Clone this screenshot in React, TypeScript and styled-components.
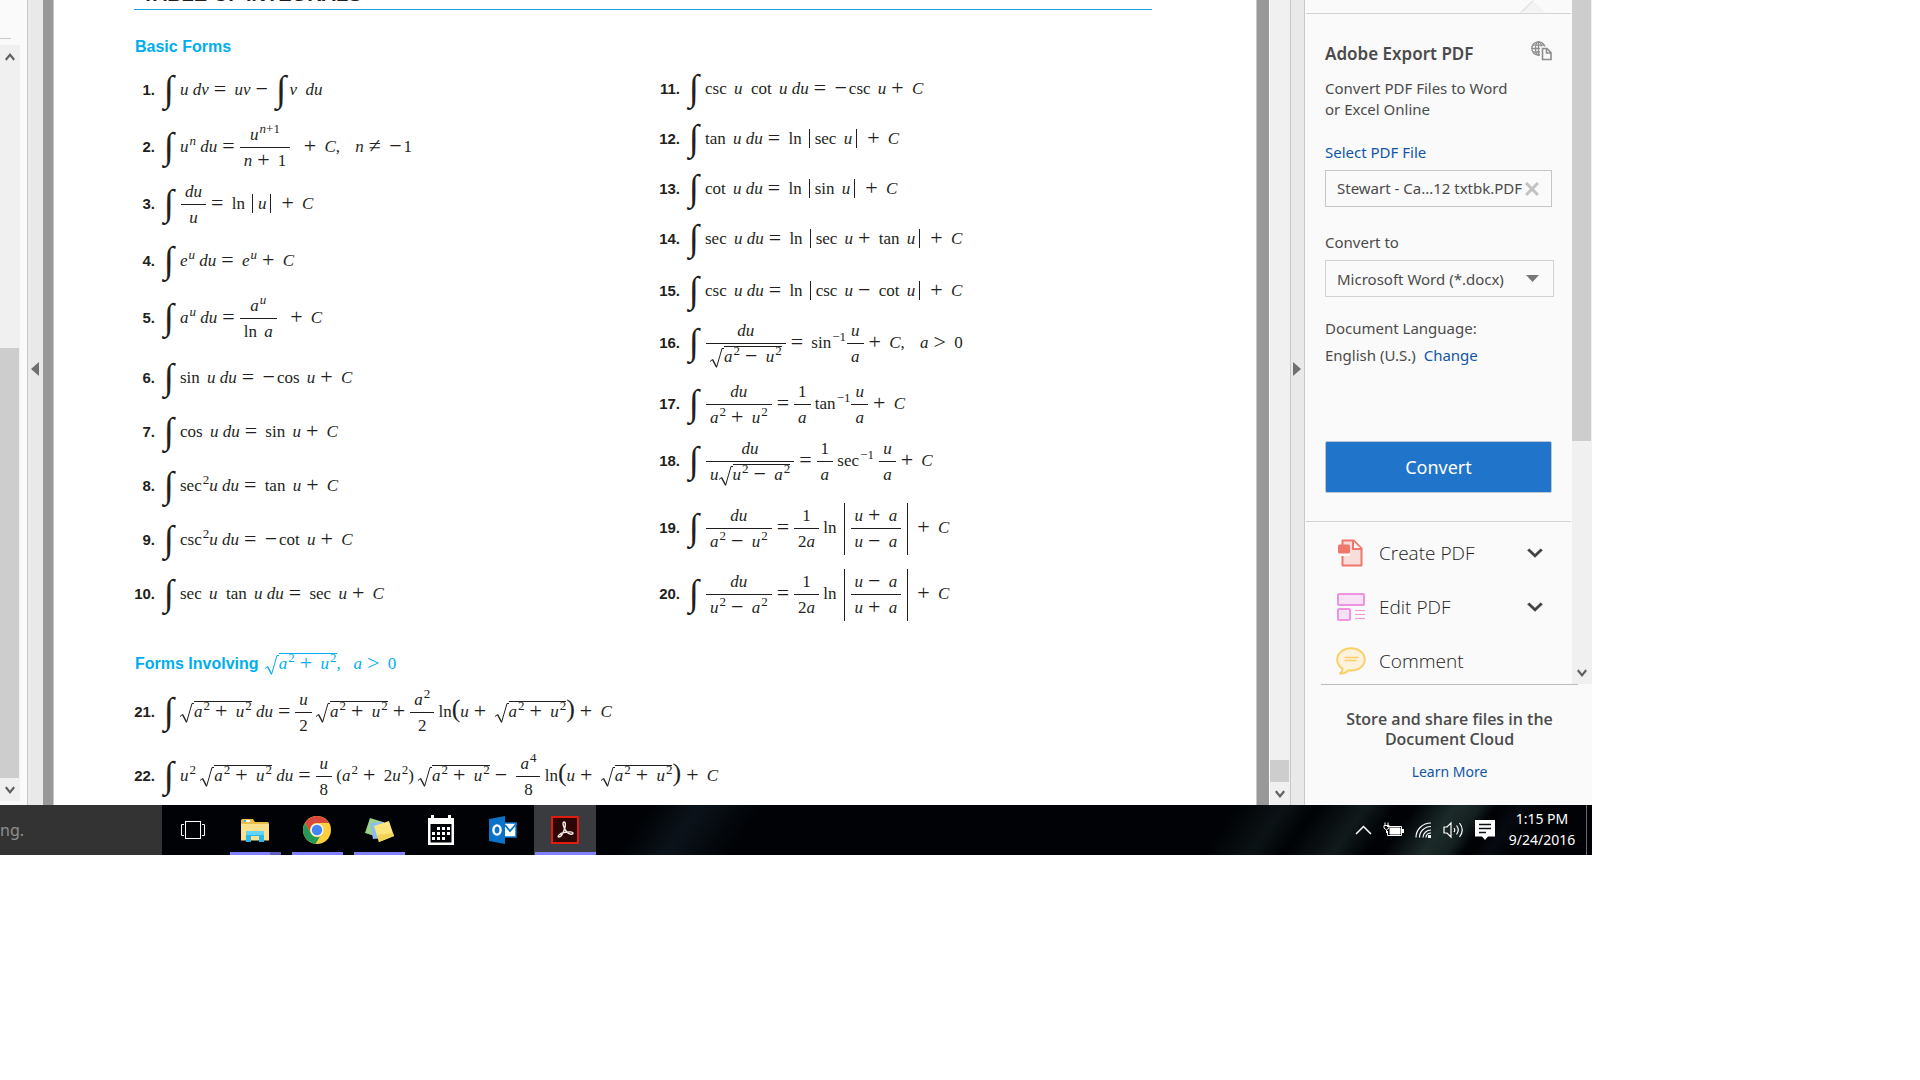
import React from "react";
import styled, { createGlobalStyle } from "styled-components";

const SERIF = `"Liberation Serif", "Times New Roman", serif`;
const SANS = `"Liberation Sans", Arial, sans-serif`;
const UI = `"Noto Sans", "Open Sans", sans-serif`;

const GlobalStyle = createGlobalStyle`
  *, *::before, *::after { box-sizing: border-box; }
  body { margin: 0; background: #fff; }
  button, input, select { font: inherit; margin: 0; padding: 0; border: 0; background: none; color: inherit; }
  h1, h2, p, ol, ul { margin: 0; padding: 0; }
`;

/* ---------- shell ---------- */
const Screen = styled.div`
  width: 100%;
  max-width: 1592px;
  font-family: ${UI};
`;
const Workspace = styled.main`
  display: flex;
  align-items: stretch;
  overflow: hidden;
`;
const ThumbPanel = styled.aside`
  flex: none;
  width: 27px;
  background: #fafafa;
  display: flex;
  flex-direction: column;
  padding-bottom: 4px;
`;
const ThumbHead = styled.div`
  width: 11px;
  height: 39px;
  margin-bottom: 6px;
  border-bottom: 1px solid #c8c8c8;
`;
const Track = styled.div<{ $grow?: boolean }>`
  flex: ${(p) => (p.$grow ? 1 : "none")};
  width: 20px;
  display: flex;
  flex-direction: column;
  background: #f0f0f0;
`;
const Space = styled.div<{ $n: number }>`
  flex: ${(p) => p.$n} 1 0;
`;
const Thumb = styled.div<{ $n?: number; $h?: number }>`
  flex: ${(p) => (p.$n ? `${p.$n} 1 0` : "none")};
  height: ${(p) => (p.$h ? `${p.$h}px` : "auto")};
  width: 19px;
  background: #cdcdcd;
`;
const ScrollButton = styled.button`
  flex: none;
  width: 19px;
  height: 23px;
  display: flex;
  align-items: center;
  justify-content: center;
  color: #606060;
`;
const Splitter = styled.button<{ $right?: boolean }>`
  && {
    flex: none;
    width: ${(p) => (p.$right ? 15 : 16)}px;
    display: flex;
    align-items: flex-start;
    justify-content: center;
    padding: 362px 2px 0 0;
    background: #e9e9e9;
    border-left: 1px solid #c8c8c8;
    border-right: ${(p) => (p.$right ? "1px solid #c8c8c8" : "0")};
  }
`;
const Gutter = styled.div<{ $right?: boolean }>`
  flex: none;
  width: ${(p) => (p.$right ? 14 : 11)}px;
  background: #999;
  border-left: ${(p) => (p.$right ? "1px solid #c8c8c8" : "0")};
  border-right: ${(p) => (p.$right ? "1px solid #fff" : "1px solid #c8c8c8")};
`;

/* ---------- document ---------- */
const Page = styled.article`
  flex: 1;
  min-width: 0;
  overflow: hidden;
  background: #fff;
  padding: 0 104px 0 80px;
  color: #231f20;
  font: 17px/20px ${SERIF};
`;
const Title = styled.h1`
  margin-top: -18px;
  padding: 0 8px 3px;
  border-bottom: 1px solid #1ba5dd;
  font: bold 20px/24px ${SANS};
  white-space: nowrap;
`;
const Heading = styled.h2<{ $gap?: number }>`
  margin: 27px 0 ${(p) => p.$gap ?? 4}px 1px;
  color: #00aeef;
  font: 17px/20px ${SERIF};
  white-space: nowrap;
`;
const HeadWords = styled.span`
  margin-right: 2px;
  font: bold 16px/20px ${SANS};
`;
const Columns = styled.div`
  display: grid;
  grid-template-columns: 525px 1fr;
  align-items: start;
`;
const List = styled.ol<{ $top?: number }>`
  list-style: none;
  margin-top: ${(p) => p.$top ?? 0}px;
`;
const Row = styled.li<{ $h: number; $gap?: number }>`
  display: flex;
  align-items: center;
  min-height: ${(p) => p.$h}px;
  margin-top: ${(p) => p.$gap ?? 0}px;
  white-space: nowrap;
`;
const Num = styled.span`
  width: 21px;
  margin-right: 9px;
  text-align: right;
  font: bold 15px/20px ${SANS};
`;
const Body = styled.span`
  display: block;
  height: 20px;
  margin-left: 7px;
`;
const IntSign = styled.span`
  display: inline-block;
  width: 9px;
  height: 20px;
  font-size: 37px;
  line-height: 18px;
  vertical-align: -6px;
`;
const V = styled.i``;
const Fn = styled.span`
  margin-right: 3px;
`;
const Op = styled.span`
  margin: 0 4px 0 5px;
  font-size: 22px;
  line-height: 0;
  vertical-align: -1px;
`;
const Neg = styled.span`
  margin-right: 2px;
  font-size: 22px;
  line-height: 0;
  vertical-align: -1px;
`;
const Sup = styled.sup`
  margin-left: 1px;
  font-size: 13px;
  line-height: 0;
  vertical-align: 7px;
`;
const FracBox = styled.span`
  display: inline-flex;
  flex-direction: column;
  align-items: center;
  vertical-align: 12px;
  margin: -14px 0 -14px 1px;
`;
const Top = styled.span`
  padding: 0 4px 2px;
`;
const Bottom = styled.span`
  align-self: stretch;
  text-align: center;
  padding: 3px 4px 0;
  border-top: 1px solid currentColor;
`;
const Abs = styled.span`
  margin: 0 5px 0 4px;
  padding: 0 4px 0 5px;
  border: solid currentColor;
  border-width: 0 1px;
`;
const BigAbs = styled.span`
  display: inline-flex;
  vertical-align: 12px;
  margin: -17px 4px -17px 7px;
  padding: 3px 6px;
  border: solid currentColor;
  border-width: 0 1px;
  & > ${FracBox} { margin: 0; }
`;
const RootSign = styled.svg`
  width: 14px;
  height: 20px;
  margin: -3px 0;
  vertical-align: -3px;
`;
const Radicand = styled.span`
  display: inline-block;
  line-height: 20px;
  box-shadow: 0 -1px 0 currentColor;
`;
const Paren = styled.span`
  font-size: 26px;
  line-height: 0;
`;
const Cond = styled.span`
  margin-left: 11px;
`;

const Int = () => <IntSign>∫</IntSign>;
const Frac = ({ t, b }: { t: React.ReactNode; b: React.ReactNode }) => (
  <FracBox><Top>{t}</Top><Bottom>{b}</Bottom></FracBox>
);
const Root = ({ children }: { children: React.ReactNode }) => (
  <span>
    <RootSign viewBox="0 0 14 20" fill="none" stroke="currentColor" aria-hidden="true">
      <path d="M0 13.5 2.5 11.5" strokeWidth="1" />
      <path d="M2.5 11.5 6.5 19" strokeWidth="1.5" />
      <path d="M6.5 19.5 12 .5H14" strokeWidth="1" />
    </RootSign>
    <Radicand>{children}</Radicand>
  </span>
);
const u = <V>u</V>;
const a = <V>a</V>;
const du = <V>du</V>;
const u2 = <><V>u</V><Sup>2</Sup></>;
const a2 = <><V>a</V><Sup>2</Sup></>;
const eq = <Op>=</Op>;
const plusC = <><Op>+</Op> <V>C</V></>;
const aPlusU = <>{a2}<Op>+</Op> {u2}</>;
const rootAU = <Root>{aPlusU}</Root>;
const lnRoot = <>ln<Paren>(</Paren>{u}<Op>+</Op> {rootAU}<Paren>)</Paren>{plusC}</>;

const Formula = ({ n, h, gap, children }: { n: number; h: number; gap?: number; children: React.ReactNode }) => (
  <Row $h={h} $gap={gap}><Num>{n}.</Num><Int /><Body>{children}</Body></Row>
);

/* ---------- tools panel ---------- */
const Tools = styled.aside`
  flex: none;
  width: 287px;
  background: #fafafa;
  color: #4b4b4b;
  font-size: 15px;
  line-height: 21px;
`;
const ToolsScroll = styled.div`
  display: flex;
  height: 684px;
`;
const ToolsBody = styled.div`
  flex: 1;
  min-width: 0;
  padding: 0 1px;
  white-space: nowrap;
`;
const Notch = styled.div`
  height: 14px;
  padding-left: 214px;
  border-bottom: 1px solid #d4d4d4;
  line-height: 0;
`;
const Export = styled.section`
  display: flex;
  flex-direction: column;
  align-items: flex-start;
  height: 508px;
  padding: 27px 19px 0;
  border-bottom: 1px solid #d4d4d4;
`;
const ExportHead = styled.div`
  align-self: stretch;
  display: flex;
  justify-content: space-between;
  margin-bottom: 11px;
`;
const ExportTitle = styled.h2`
  font: 600 17px/26px ${UI};
`;
const FieldLabel = styled.label<{ $link?: boolean; $top: number }>`
  margin: ${(p) => p.$top}px 0 7px;
  color: ${(p) => (p.$link ? "#0f56a8" : "inherit")};
`;
const Field = styled.div`
  align-self: stretch;
  display: flex;
  align-items: center;
  height: 37px;
  padding-left: 11px;
  border: 1px solid #c6c6c6;
  & > input { flex: 1; min-width: 0; width: 100%; }
  & > button { line-height: 0; margin: 0 12px 0 0; }
`;
const SelectField = styled(Field)`
  position: relative;
  margin-right: -2px;
  border-color: #d2d2d2;
  & > select { width: 100%; padding-top: 2px; appearance: none; }
  & > svg { position: absolute; right: 14px; top: 14px; pointer-events: none; }
`;
const Language = styled.p`
  margin-top: 18px;
  line-height: 27px;
`;
const Link = styled.a`
  color: #0f56a8;
  text-decoration: none;
`;
const ConvertButton = styled.button`
  && {
    align-self: stretch;
    height: 52px;
    margin-top: 72px;
    border: 1px solid #b9c6d3;
    border-radius: 2px;
    background: #2074c9;
    color: #fff;
    font-size: 18px;
  }
`;
const ToolButton = styled.button`
  && {
    width: 100%;
    height: 54px;
    display: grid;
    grid-template-columns: 30px 1fr 16px;
    column-gap: 13px;
    align-items: center;
    padding: 0 28px 0 30px;
    text-align: left;
    color: #222;
    font: 300 19px/26px "Open Sans", ${UI};
  }
`;
const ToolList = styled.div`
  padding-top: 4px;
`;
const Promo = styled.section`
  margin: 0 14px 0 16px;
  padding-top: 24px;
  border-top: 1px solid #bcbcbc;
  text-align: center;
  line-height: 20px;
  white-space: nowrap;
  & > p { font: 600 16px/20px "Open Sans", ${UI}; }
  & > a { display: block; margin-top: 13px; font-size: 14px; }
`;

/* ---------- taskbar ---------- */
const Taskbar = styled.footer`
  display: flex;
  height: 50px;
  color: #fff;
  background:
    linear-gradient(125deg, transparent 76%, #17232580 79%, transparent 81%),
    linear-gradient(125deg, transparent 81%, #1c2a2899 84%, transparent 86%),
    linear-gradient(125deg, transparent 87%, #1c2b29 89.5%, #14201f 91%, transparent 92%),
    linear-gradient(125deg, transparent 92.5%, #10152066 93.5%, transparent 95%),
    linear-gradient(125deg, transparent 40%, #0b131a 43%, transparent 47%),
    #000205;
`;
const Search = styled.input`
  && {
    flex: none;
    width: 162px;
    background: #333;
    color: #909090;
    font-size: 16px;
  }
`;
const Apps = styled.nav`
  display: flex;
  flex: 1;
`;
const AppButton = styled.button<{ $active?: boolean; $open?: boolean; $many?: boolean }>`
  && {
    width: 62px;
    height: 50px;
    display: grid;
    place-items: center;
    background:
      ${(p) =>
        p.$many
          ? "linear-gradient(90deg, #8080fb 40px, #5f5fb8 40px) center bottom / 51px 3px no-repeat,"
          : p.$open || p.$active
          ? `linear-gradient(#8080fb, #8080fb) center bottom / ${p.$active ? 61 : 51}px 3px no-repeat,`
          : ""}
      ${(p) => (p.$active ? "#3a3b3e" : "transparent")};
  }
`;
const Tray = styled.div`
  display: flex;
  align-items: center;
  gap: 11px;
  & > button { line-height: 0; }
`;
const Clock = styled.time`
  text-align: center;
  font-size: 14px;
  line-height: 21px;
  padding-bottom: 2px;
  margin-left: 1px;
  width: 70px;
`;
const Peek = styled.button`
  && {
    align-self: stretch;
    width: 6px;
    margin-left: -2px;
    border-left: 1px solid #6a6a6a;
  }
`;

const Chevron = ({ up, big }: { up?: boolean; big?: boolean }) => (
  <svg width={big ? 16 : 10} height={big ? 10 : 8} viewBox="0 0 10 7" preserveAspectRatio="none" fill="none" stroke={big ? "#444" : "currentColor"} strokeWidth={big ? 1.9 : 2}>
    <path d={up ? "M.8 6 5 1.5 9.2 6" : "M.8 1 5 5.5 9.2 1"} />
  </svg>
);

const CreateIcon = () => (
  <svg width="30" height="28" viewBox="0 0 30 28">
    <path d="M6.5 1.5h11l8 8v17h-19z" fill="#f8dedb" stroke="#f0776b" strokeWidth="2" strokeLinejoin="round" />
    <path d="M17 2v8h8" fill="#fff" stroke="#f0776b" strokeWidth="2" />
    <path d="M4 14h10v3H4z" fill="#fafafa" />
    <rect x="2" y="5.500" width="12" height="9" rx="1.500" fill="#f0776b" />
  </svg>
);
const EditIcon = () => (
  <svg width="30" height="28" viewBox="0 0 30 28" fill="#f8e2f5" stroke="#ee93e0" strokeWidth="2">
    <rect x="2" y="1" width="26" height="11" rx="1" />
    <rect x="2" y="16" width="12" height="11" rx="1" />
    <path d="M19 17.500h10M19 21.500h10M19 25.500h10" strokeWidth="1.200" />
  </svg>
);
const CommentIcon = () => (
  <svg width="30" height="28" viewBox="0 0 30 28" fill="#fdf3dc" stroke="#fccf66" strokeWidth="2">
    <path d="M15 1.200C7.500 1.200 1.200 6 1.200 12.500c0 4 2.300 7.300 5.500 9.300-.3 2-1.200 3.500-2.700 4.700 3.500.2 6.500-1.200 8.300-3.200.9.100 1.800.2 2.700.2 7.500 0 13.800-4.500 13.800-11S22.500 1.200 15 1.200z" strokeLinejoin="round" />
    <path d="M8.500 10.500h14M8.500 13.500h12" strokeWidth="1.300" />
  </svg>
);
const GlobeIcon = () => (
  <svg width="21" height="20" viewBox="0 0 21 20" fill="none" stroke="#8e8e8e" strokeWidth="1.300">
    <circle cx="7.500" cy="7.500" r="6.700" />
    <ellipse cx="7.500" cy="7.500" rx="3" ry="6.700" />
    <path d="M1 7.500h13M2 4.200h11M2 11h9M7.500 1v13" />
    <path d="M11 7.500h5.500l3.500 3.500v8h-9z" fill="#fafafa" stroke="#fafafa" strokeWidth="4" />
    <path d="M11.500 7.500H16l4 4V18.500h-8.500zM15.500 7.500v4.500H20" fill="#fafafa" strokeWidth="1.600" />
  </svg>
);

const TaskView = () => (
  <svg width="26" height="20" viewBox="0 0 26 20" fill="none" stroke="#fff">
    <rect x="5.500" y="1.500" width="15" height="17" />
    <path d="M4 4.500H1.500v11H4M22 4.500h2.500v11H22" />
  </svg>
);
const Explorer = () => (
  <svg width="28" height="24" viewBox="0 0 28 24">
    <path d="M0 2.500Q0 1 1.500 1H12l2 3h12.500q1.500 0 1.500 1.500V22H0z" fill="#e9bd4b" />
    <path d="M0 6h28v16.500H0z" fill="#fde08c" />
    <path d="M3 2h6v2H3z" fill="#fff" /><path d="M3 2h2v2H3z" fill="#37b6e8" />
    <path d="M5 24V13h18v11h-5v-6h-8v6z" fill="#2ab8ea" />
    <path d="M5 17v-4h18v4z" fill="#63d3f7" />
  </svg>
);
const Chrome = () => (
  <svg width="28" height="28" viewBox="0 0 28 28">
    <circle cx="14" cy="14" r="14" fill="#fdcf3f" />
    <path d="M1.900 7A14 14 0 0 1 26.100 7H14a7 7 0 0 0-6.100 10.500z" fill="#d8483c" />
    <path d="M1.900 7 8 17.500A7 7 0 0 0 17 20.500L12.500 27.900A14 14 0 0 1 1.900 7z" fill="#249a56" />
    <circle cx="14" cy="14" r="6.600" fill="#f4f4f4" />
    <circle cx="14" cy="14" r="5.200" fill="#4285f4" />
  </svg>
);
const Sticky = () => (
  <svg width="30" height="26" viewBox="0 0 30 26">
    <path d="M6 1 19 5 14 20 1 16z" fill="#9bd487" />
    <path d="M6 6 20 5l2 16-13 1z" fill="#8dbcf0" />
    <path d="M10 9 25 4l5 15-15 6z" fill="#fbe57d" />
    <path d="M13 18 29 16l1 3-15 6z" fill="#f2d35a" />
  </svg>
);
const CalendarIcon = () => (
  <svg width="28" height="30" viewBox="0 0 28 30">
    <path d="M1 3h3V0h3v3h14V0h3v3h3v27H1z" fill="#fff" />
    <path d="M3.500 9h21v18.500h-21z" fill="#000205" />
    <path d="M10 12h3v3h-3zM15 12h3v3h-3zM20 12h3v3h-3zM5 17h3v3H5zM10 17h3v3h-3zM15 17h3v3h-3zM20 17h3v3h-3zM5 22h3v3H5zM10 22h3v3h-3zM15 22h3v3h-3z" fill="#fff" />
  </svg>
);
const Outlook = () => (
  <svg width="28" height="28" viewBox="0 0 28 28">
    <path d="M15 7h12v14H15z" fill="#fff" stroke="#0a72c8" strokeWidth="1.500" />
    <path d="m16 9 5 6 7-8" fill="none" stroke="#0a72c8" strokeWidth="1.800" />
    <path d="M0 3 16 0v28L0 25z" fill="#0a72c8" />
    <ellipse cx="8" cy="14" rx="3.600" ry="4.600" fill="none" stroke="#fff" strokeWidth="2.400" />
  </svg>
);
const Acrobat = () => (
  <svg width="28" height="28" viewBox="0 0 28 28">
    <rect x="1" y="1" width="26" height="26" fill="#2b0605" stroke="#e11b0d" strokeWidth="2" />
    <path d="M13 6c2 0 1.500 4 .5 7-1.200 3.600-3.500 8-5.500 8-2.500 0 .5-3.500 5-4.500s9-1 9 .8-4.500 1-7-2.300S11 6 13 6z" fill="none" stroke="#f3e9e8" strokeWidth="1.400" />
  </svg>
);

export default function App() {
  return (
    <>
      <GlobalStyle />
      <Screen>
        <Workspace>
          <ThumbPanel>
            <ThumbHead />
            <Track $grow>
              <ScrollButton aria-label="Scroll thumbnails up"><Chevron up /></ScrollButton>
              <Space $n={282} />
              <Thumb $n={432} />
              <ScrollButton aria-label="Scroll thumbnails down"><Chevron /></ScrollButton>
            </Track>
          </ThumbPanel>
          <Splitter aria-label="Hide navigation pane">
            <svg width="8" height="14" viewBox="0 0 8 14"><path d="M8 0v14L0 7z" fill="#707070" /></svg>
          </Splitter>
          <Gutter />
          <Page>
            <Title>TABLE OF INTEGRALS</Title>
            <Heading><HeadWords>Basic Forms</HeadWords></Heading>
            <Columns>
              <List>
                <Formula n={1} h={57}>{u} <V>dv</V>{eq} <V>uv</V><Op>−</Op> <Int />&nbsp;<V>v</V>&nbsp; {du}</Formula>
                <Formula n={2} h={57}>{u}<Sup><V>n</V></Sup> {du}{eq}<Frac t={<>{u}<Sup><V>n</V>+1</Sup></>} b={<><V>n</V><Op>+</Op> 1</>} />&nbsp; {plusC},<Cond> <V>n</V><Op>≠</Op> <Neg>−</Neg>1</Cond></Formula>
                <Formula n={3} h={57}><Frac t={du} b={u} />{eq} <Fn>ln</Fn><Abs>{u}</Abs>{plusC}</Formula>
                <Formula n={4} h={57}><V>e</V><Sup>{u}</Sup> {du}{eq} <V>e</V><Sup>{u}</Sup>{plusC}</Formula>
                <Formula n={5} h={57}>{a}<Sup>{u}</Sup> {du}{eq}<Frac t={<>{a}<Sup>{u}</Sup></>} b={<><Fn>ln</Fn> {a}</>} />&nbsp; {plusC}</Formula>
                <Formula n={6} h={54} gap={5}><Fn>sin</Fn> {u} {du}{eq} <Neg>−</Neg><Fn>cos</Fn> {u}{plusC}</Formula>
                <Formula n={7} h={54}><Fn>cos</Fn> {u} {du}{eq} <Fn>sin</Fn> {u}{plusC}</Formula>
                <Formula n={8} h={54}>sec<Sup>2</Sup>{u} {du}{eq} <Fn>tan</Fn> {u}{plusC}</Formula>
                <Formula n={9} h={54}>csc<Sup>2</Sup>{u} {du}{eq} <Neg>−</Neg><Fn>cot</Fn> {u}{plusC}</Formula>
                <Formula n={10} h={54}><Fn>sec</Fn> {u}&nbsp; <Fn>tan</Fn> {u} {du}{eq} <Fn>sec</Fn> {u}{plusC}</Formula>
              </List>
              <List $top={3}>
                <Formula n={11} h={50}><Fn>csc</Fn> {u}&nbsp; <Fn>cot</Fn> {u} {du}{eq} <Neg>−</Neg><Fn>csc</Fn> {u}{plusC}</Formula>
                <Formula n={12} h={50}><Fn>tan</Fn> {u} {du}{eq} <Fn>ln</Fn><Abs><Fn>sec</Fn> {u}</Abs>{plusC}</Formula>
                <Formula n={13} h={50}><Fn>cot</Fn> {u} {du}{eq} <Fn>ln</Fn><Abs><Fn>sin</Fn> {u}</Abs>{plusC}</Formula>
                <Formula n={14} h={50}><Fn>sec</Fn> {u} {du}{eq} <Fn>ln</Fn><Abs><Fn>sec</Fn> {u}<Op>+</Op> <Fn>tan</Fn> {u}</Abs>{plusC}</Formula>
                <Formula n={15} h={52} gap={1}><Fn>csc</Fn> {u} {du}{eq} <Fn>ln</Fn><Abs><Fn>csc</Fn> {u}<Op>−</Op> <Fn>cot</Fn> {u}</Abs>{plusC}</Formula>
                <Formula n={16} h={52}><Frac t={du} b={<Root>{a2}<Op>−</Op> {u2}</Root>} />{eq} sin<Sup>−1</Sup><Frac t={u} b={a} />{plusC},<Cond> {a}<Op>&gt;</Op> 0</Cond></Formula>
                <Formula n={17} h={52} gap={9}><Frac t={du} b={aPlusU} />{eq}<Frac t="1" b={a} /> tan<Sup>−1</Sup><Frac t={u} b={a} />{plusC}</Formula>
                <Formula n={18} h={52} gap={5}><Frac t={du} b={<>{u}<Root>{u2}<Op>−</Op> {a2}</Root></>} />{eq}<Frac t="1" b={a} /> sec<Sup>−1</Sup> <Frac t={u} b={a} />{plusC}</Formula>
                <Formula n={19} h={66} gap={8}><Frac t={du} b={<>{a2}<Op>−</Op> {u2}</>} />{eq}<Frac t="1" b={<>2{a}</>} /> ln<BigAbs><Frac t={<>{u}<Op>+</Op> {a}</>} b={<>{u}<Op>−</Op> {a}</>} /></BigAbs>{plusC}</Formula>
                <Formula n={20} h={66}><Frac t={du} b={<>{u2}<Op>−</Op> {a2}</>} />{eq}<Frac t="1" b={<>2{a}</>} /> ln<BigAbs><Frac t={<>{u}<Op>−</Op> {a}</>} b={<>{u}<Op>+</Op> {a}</>} /></BigAbs>{plusC}</Formula>
              </List>
            </Columns>
            <Heading $gap={8}><HeadWords>Forms Involving</HeadWords> {rootAU},&nbsp;&nbsp; {a}<Op>&gt;</Op> 0</Heading>
            <List>
              <Formula n={21} h={60}>{rootAU} {du}{eq}<Frac t={u} b="2" /> {rootAU}<Op>+</Op><Frac t={a2} b="2" /> {lnRoot}</Formula>
              <Formula n={22} h={58} gap={5}>{u2} {rootAU} {du}{eq}<Frac t={u} b="8" /> ({a2}<Op>+</Op> 2{u2}) {rootAU}<Op>−</Op> <Frac t={<>{a}<Sup>4</Sup></>} b="8" /> {lnRoot}</Formula>
            </List>
          </Page>
          <Gutter $right />
          <Track>
            <Space $n={1} />
            <Thumb $h={22} />
            <ScrollButton aria-label="Scroll document down"><Chevron /></ScrollButton>
          </Track>
          <Splitter $right aria-label="Hide tools pane">
            <svg width="8" height="14" viewBox="0 0 8 14"><path d="M0 0v14l8-7z" fill="#707070" /></svg>
          </Splitter>
          <Tools>
            <ToolsScroll>
              <ToolsBody>
                <Notch>
                  <svg width="26" height="13" viewBox="0 0 26 13">
                    <path d="M1 12.500 13 .5l12 12z" fill="#f3f3f3" />
                    <path d="M1 12.500 13 .5" stroke="#d0d0d0" />
                  </svg>
                </Notch>
                <Export>
                  <ExportHead><ExportTitle>Adobe Export PDF</ExportTitle><GlobeIcon /></ExportHead>
                  <p>Convert PDF Files to Word<br />or Excel Online</p>
                  <FieldLabel htmlFor="pdf" $link $top={22}>Select PDF File</FieldLabel>
                  <Field>
                    <input id="pdf" readOnly value="Stewart - Ca...12 txtbk.PDF" />
                    <button aria-label="Remove file">
                      <svg width="14" height="14" viewBox="0 0 14 14" stroke="#c2c2c2" strokeWidth="3"><path d="M1 1l12 12M13 1 1 13" /></svg>
                    </button>
                  </Field>
                  <FieldLabel htmlFor="format" $top={25}>Convert to</FieldLabel>
                  <SelectField>
                    <select id="format"><option>Microsoft Word (*.docx)</option></select>
                    <svg width="13" height="7" viewBox="0 0 13 7"><path d="M0 0h13L6.500 7z" fill="#777" /></svg>
                  </SelectField>
                  <Language>Document Language:<br />English (U.S.)&nbsp; <Link href="#language">Change</Link></Language>
                  <ConvertButton>Convert</ConvertButton>
                </Export>
                <ToolList>
                  <ToolButton><CreateIcon />Create PDF<Chevron big /></ToolButton>
                  <ToolButton><EditIcon />Edit PDF<Chevron big /></ToolButton>
                  <ToolButton><CommentIcon />Comment</ToolButton>
                </ToolList>
              </ToolsBody>
              <Track>
                <Thumb $h={441} />
                <Space $n={1} />
                <ScrollButton aria-label="Scroll tools down"><Chevron /></ScrollButton>
              </Track>
            </ToolsScroll>
            <Promo>
              <p>Store and share files in the<br />Document Cloud</p>
              <Link href="#cloud">Learn More</Link>
            </Promo>
          </Tools>
        </Workspace>
        <Taskbar>
          <Search aria-label="Search" defaultValue="ng." />
          <Apps>
            <AppButton aria-label="Task view"><TaskView /></AppButton>
            <AppButton aria-label="File Explorer" $many><Explorer /></AppButton>
            <AppButton aria-label="Chrome" $open><Chrome /></AppButton>
            <AppButton aria-label="Sticky Notes" $open><Sticky /></AppButton>
            <AppButton aria-label="Calendar"><CalendarIcon /></AppButton>
            <AppButton aria-label="Outlook"><Outlook /></AppButton>
            <AppButton aria-label="Acrobat" $active><Acrobat /></AppButton>
          </Apps>
          <Tray>
            <button aria-label="Show hidden icons">
              <svg width="17" height="10" viewBox="0 0 17 10" fill="none" stroke="#fff" strokeWidth="1.500"><path d="m1 9 7.500-7.500L16 9" /></svg>
            </button>
            <button aria-label="Battery">
              <svg width="21" height="16" viewBox="0 0 21 16" fill="none" stroke="#fff">
                <path d="M4 4.500h14.500v9h-14V9" /><path d="M7 6h10v6H7z" fill="#fff" /><path d="M20 7v4" strokeWidth="2" />
                <path d="M1 3.500h5v2.500L3.500 8 1 6zM2 3V.5M5 3V.5M3.500 8v3" />
              </svg>
            </button>
            <button aria-label="Network">
              <svg width="17" height="17" viewBox="0 0 17 17" fill="none" stroke="#fff" strokeWidth="1.200">
                <path d="M1 15.500C1 7.500 7.500 1 16 1M4.500 15.500C4.500 9.500 9.500 4.500 16 4.500M8 15.500c0-4 3.500-7.500 8-7.500M11 15.500c0-2.500 2-4.500 5-4.500" />
                <path d="M13 13h3v3h-3z" fill="#fff" stroke="none" />
              </svg>
            </button>
            <button aria-label="Volume">
              <svg width="21" height="18" viewBox="0 0 21 18" fill="none" stroke="#fff" strokeWidth="1.200">
                <path d="M1 6h3l4-4v14l-4-4H1zM11 7q1.500 2 0 4M13.500 4.500q3.500 4.500 0 9M16.500 2q5.500 7 0 14" />
              </svg>
            </button>
            <button aria-label="Notifications">
              <svg width="20" height="20" viewBox="0 0 20 20">
                <path d="M0 0h20v16.500h-7L10 20l-3-3.500H0z" fill="#fff" />
                <path d="M4 4.500h12M4 8.500h12M4 12.500h7" stroke="#0a0f12" strokeWidth="1.300" />
              </svg>
            </button>
            <Clock>1:15 PM<br />9/24/2016</Clock>
            <Peek aria-label="Show desktop" />
          </Tray>
        </Taskbar>
      </Screen>
    </>
  );
}
